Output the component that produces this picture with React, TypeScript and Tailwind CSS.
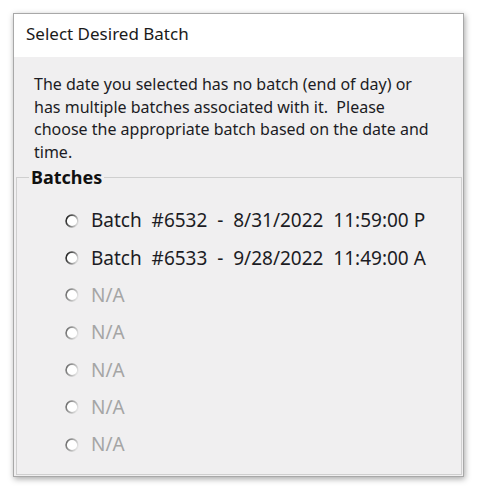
import React from 'react'

const font = { fontFamily: '"Noto Sans", "Open Sans", sans-serif' }

const batches = [
  { label: 'Batch  #6532  -  8/31/2022  11:59:00 P', enabled: true },
  { label: 'Batch  #6533  -  9/28/2022  11:49:00 A', enabled: true },
  { label: 'N/A', enabled: false },
  { label: 'N/A', enabled: false },
  { label: 'N/A', enabled: false },
  { label: 'N/A', enabled: false },
  { label: 'N/A', enabled: false },
]

function Radio({ enabled, id }: { enabled: boolean; id: string }) {
  return (
    <svg width="14" height="14" viewBox="0 0 14 14" className="shrink-0">
      <defs>
        <linearGradient id={id} x1="0" y1="0.2" x2="1" y2="0.6">
          <stop offset="0" stopColor={enabled ? '#1e1e1e' : '#6a6a6a'} />
          <stop offset="0.5" stopColor={enabled ? '#6f6f6f' : '#a8a8a8'} />
          <stop offset="1" stopColor={enabled ? '#dadada' : '#e4e4e4'} />
        </linearGradient>
      </defs>
      <circle cx="7" cy="7" r="5.9" fill="#ffffff" stroke={`url(#${id})`} strokeWidth="1.6" />
    </svg>
  )
}

export default function App() {
  return (
    <div className="min-h-screen bg-white pt-[13px] pl-[13px]" style={font}>
      <div className="w-[451px] h-[464px] flex flex-col border border-[#a8a8a8] shadow-[1px_2px_6px_rgba(0,0,0,0.35)]">
        <div className="h-[43px] bg-white pl-[12px] pt-[8px] text-[17px] leading-[23px] text-[#1a1a1a]">
          Select Desired Batch
        </div>
        <div className="flex-1 bg-[#f0eff0] flex flex-col pl-[2px] pr-[1px] pb-[1px]">
          <p className="pl-[18px] pt-[16px] text-[16px] leading-[22.5px] text-[#1c1c24] whitespace-nowrap">
            The date you selected has no batch (end of day) or
            <br />
            has multiple batches associated with it.&nbsp; Please
            <br />
            choose the appropriate batch based on the date and
            <br />
            time.
          </p>
          <fieldset className="flex-1 mt-[2px] border border-[#cfcfcf] m-0 p-0">
            <legend className="ml-[12px] px-[2px] text-[18px] font-bold leading-[24px] text-[#111]">Batches</legend>
            <div className="flex flex-col pl-[48px] pt-[13px]">
              {batches.map((b, i) => (
                <div key={i} className="h-[37.33px] flex items-center gap-[12px]">
                  <Radio enabled={b.enabled} id={`rg${i}`} />
                  <span
                    className={`whitespace-pre text-[19px] ${b.enabled ? 'text-[#1c1c24]' : 'text-[#a5a5a5]'}`}
                  >
                    {b.label}
                  </span>
                </div>
              ))}
            </div>
          </fieldset>
        </div>
      </div>
    </div>
  )
}
